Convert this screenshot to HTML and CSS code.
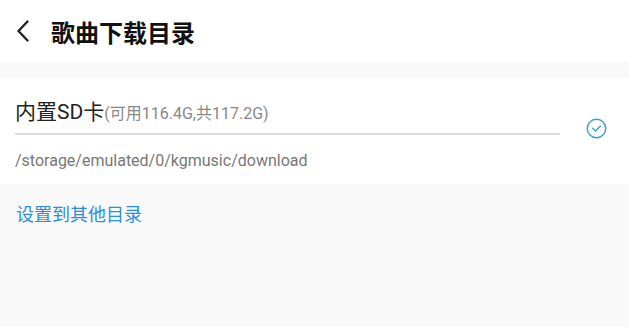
FILE: index.html
```html
<!DOCTYPE html>
<html>
<head>
<meta charset="utf-8">
<link rel="stylesheet" href="styles.css">
</head>
<body>
<div class="page">
  <header class="topbar">
    <span class="back">
      <svg width="14" height="22" viewBox="0 0 14 22"><polyline points="11.5,1.5 2.5,11 11.5,20.5" fill="none" stroke="#222" stroke-width="2.4" stroke-linecap="round" stroke-linejoin="round"/></svg>
    </span>
    <h1 class="title">歌曲下载目录</h1>
  </header>
  <section class="card">
    <div class="info">
      <div class="name">内置SD卡<span class="cap">(可用116.4G,共117.2G)</span></div>
      <div class="divider"></div>
      <div class="path">/storage/emulated/0/kgmusic/download</div>
    </div>
    <span class="check">
      <svg width="21" height="21" viewBox="0 0 20 20"><circle cx="10" cy="10" r="8.8" fill="none" stroke="#3b9be8" stroke-width="1.4"/><polyline points="6.4,9.8 9,12.3 13.6,7.8" fill="none" stroke="#3b9be8" stroke-width="1.4" stroke-linecap="round" stroke-linejoin="round"/></svg>
    </span>
  </section>
  <div class="other">设置到其他目录</div>
</div>
</body>
</html>
```
FILE: styles.css
```css
html, body {
  margin: 0;
  padding: 0;
  background: #f9f9fa;
}
body {
  font-family: Roboto, "Noto Sans CJK SC", sans-serif;
  width: 629px;
  height: 327px;
  overflow: hidden;
}
.page {
  display: flex;
  flex-direction: column;
}
.topbar {
  height: 62px;
  background: #fff;
  display: flex;
  align-items: center;
  padding-left: 16px;
  box-sizing: border-box;
}
.back {
  display: flex;
  width: 35px;
}
.title {
  margin: 0;
  font-size: 24px;
  font-weight: bold;
  color: #111;
  font-family: "Noto Sans CJK SC", sans-serif;
  line-height: 30px;
  margin-top: 2px;
}
.card {
  margin-top: 16px;
  background: #fff;
  display: flex;
  align-items: center;
  padding: 20px 0 12px 15px;
}
.info {
  flex: 1;
}
.name {
  font-size: 21px;
  line-height: 28px;
  color: #222;
}
.cap {
  font-size: 16px;
  color: #888;
}
.divider {
  margin-top: 5px;
  height: 2px;
  background: #dcdcdc;
}
.path {
  margin-top: 15px;
  font-size: 16px;
  line-height: 22px;
  color: #777;
}
.check {
  flex: 0 0 69px;
  box-sizing: border-box;
  padding-left: 4px;
  display: flex;
  justify-content: center;
  margin-top: -13px;
}
.check svg {
  flex-shrink: 0;
}
.other {
  margin-top: 19px;
  padding-left: 16px;
  font-size: 18px;
  line-height: 24px;
  color: #2b8ddd;
}
```
